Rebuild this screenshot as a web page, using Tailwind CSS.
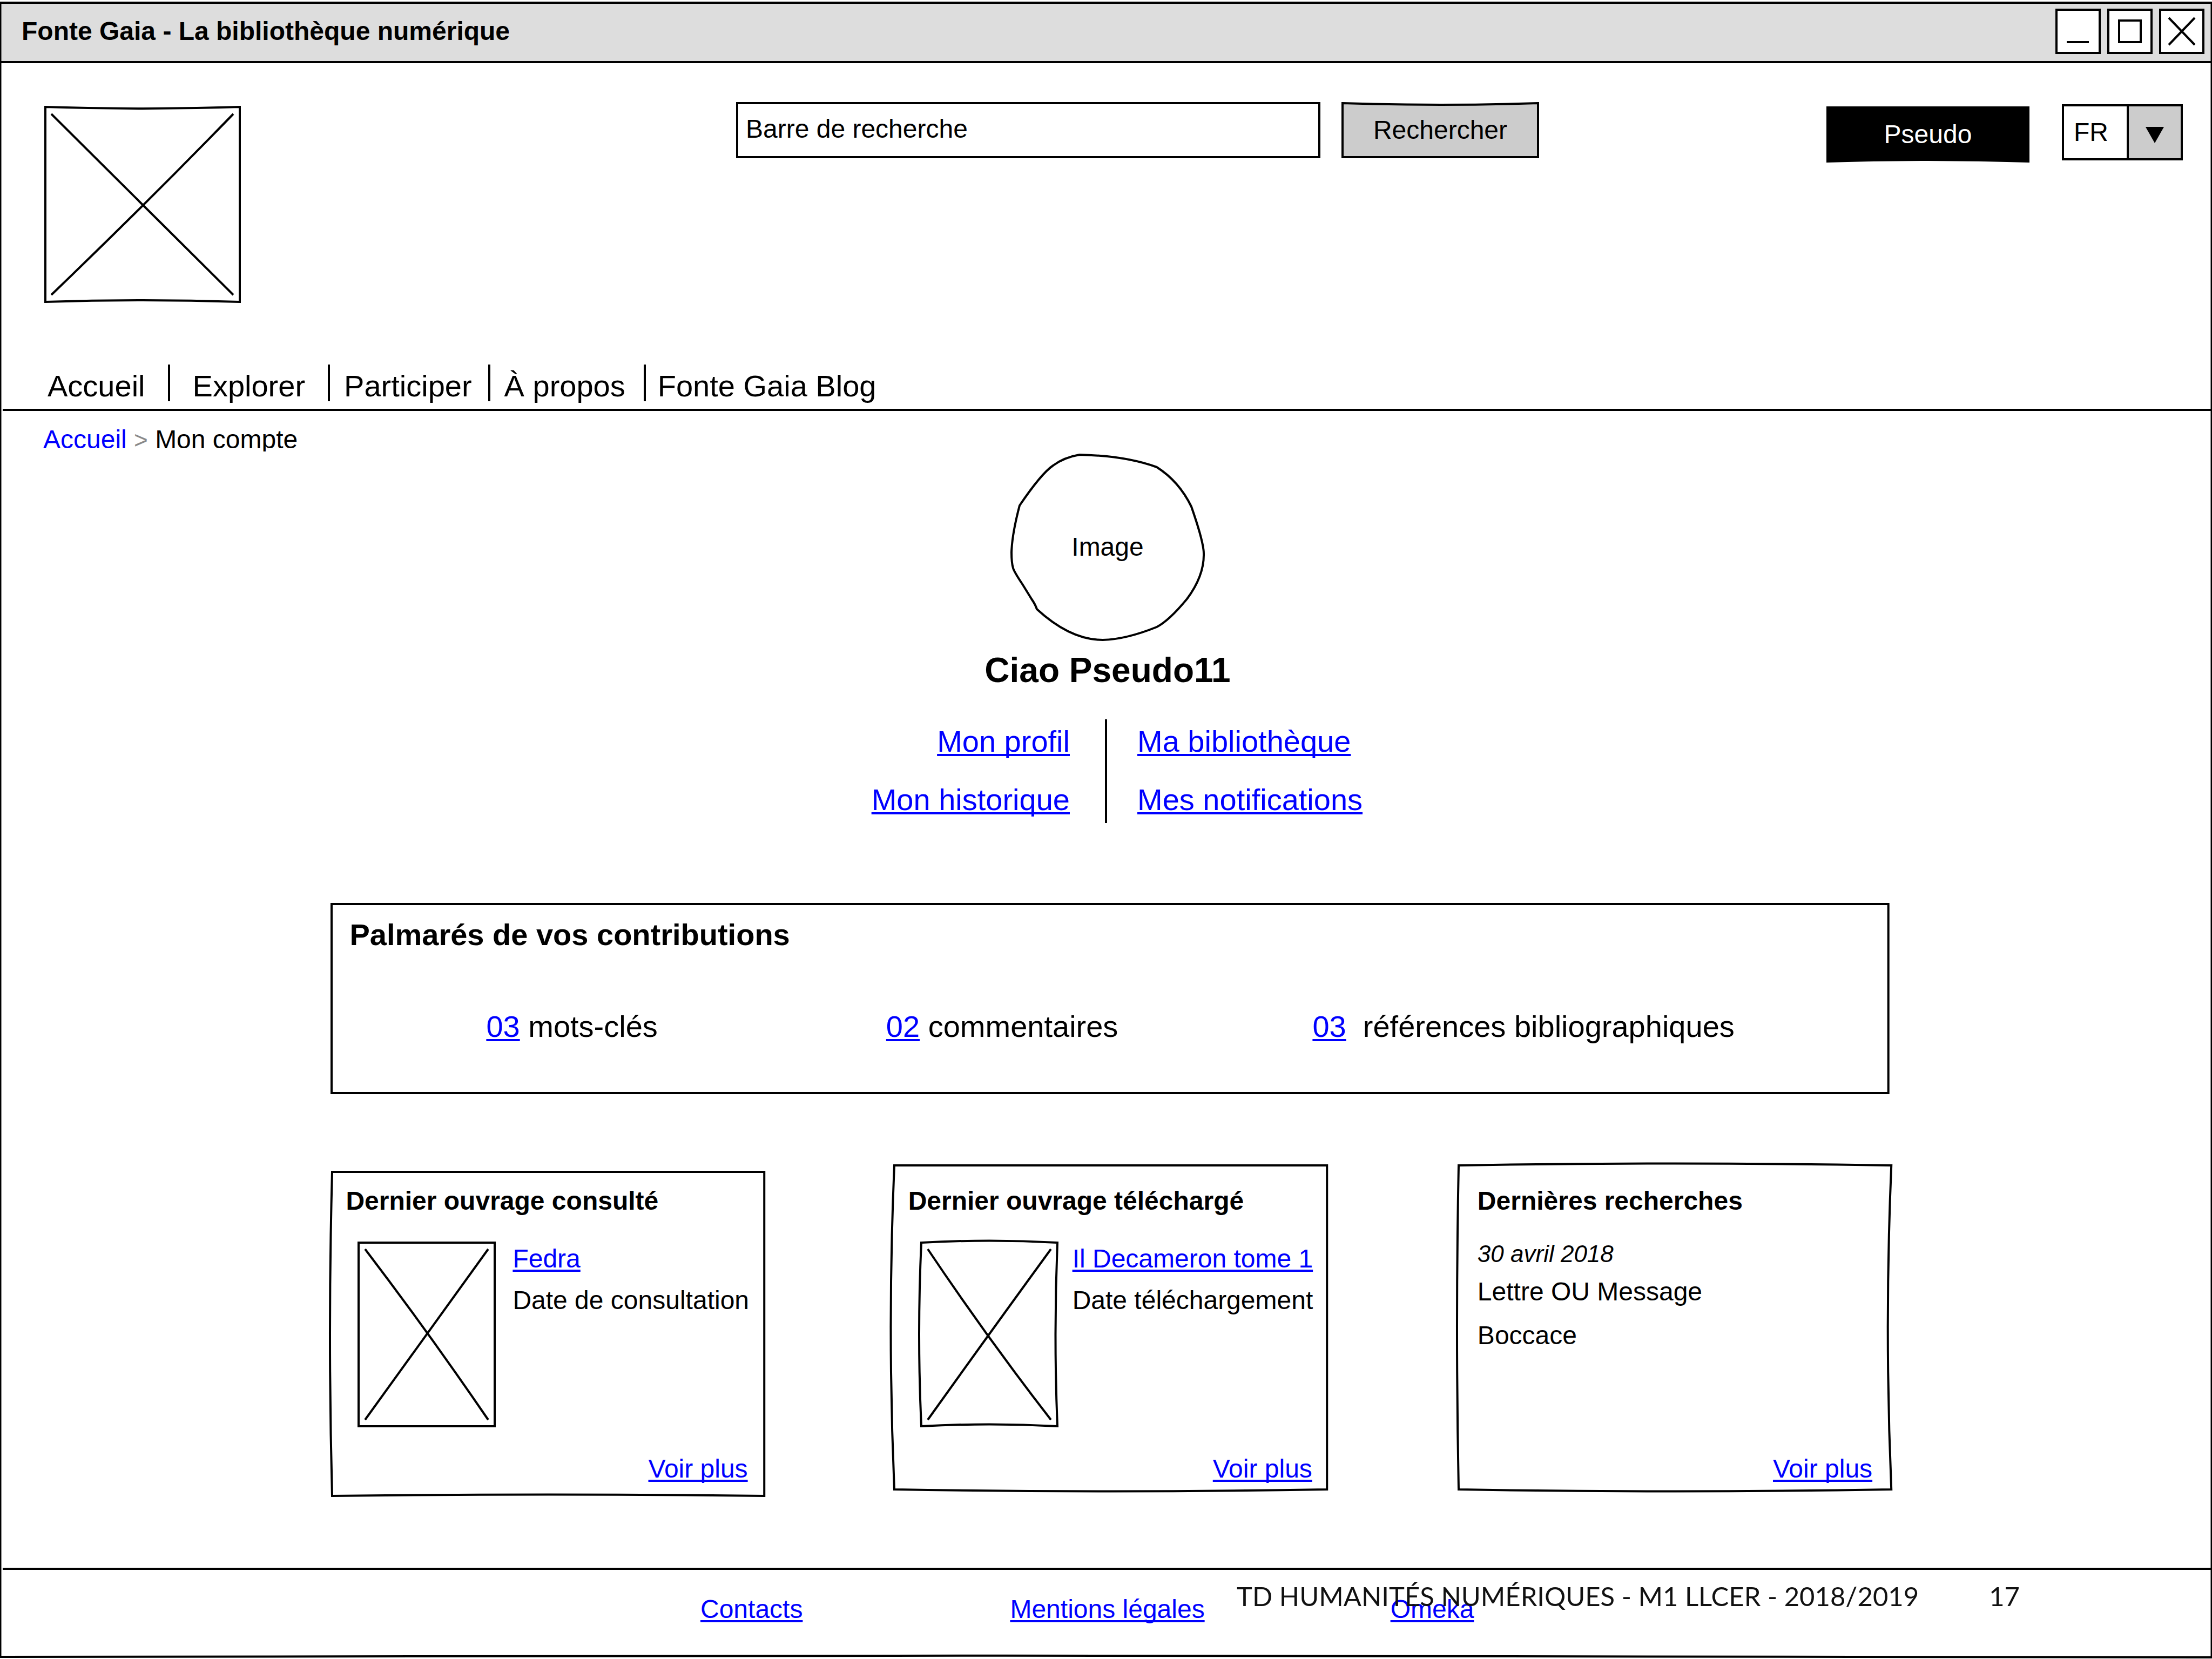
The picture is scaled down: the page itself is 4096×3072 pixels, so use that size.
<!DOCTYPE html>
<html lang="fr">
<head>
<meta charset="utf-8">
<title>Fonte Gaia - La bibliothèque numérique</title>
<script src="https://cdn.jsdelivr.net/npm/@tailwindcss/browser@4"></script>
</head>
<body class="bg-white text-black">
<div class="relative flex min-h-screen flex-col overflow-hidden pt-[3px] font-['Liberation_Sans',Arial,sans-serif] text-[48px] leading-[56px] [text-decoration-skip-ink:none]">

  <!-- window outline -->
  <svg class="pointer-events-none absolute inset-0 h-full w-full" viewBox="0 0 4096 3072" preserveAspectRatio="none" fill="none" stroke="#000" stroke-width="3" aria-hidden="true">
    <path d="M1 4V3067M4095 4Q4100 1500 4095 3069"/>
    <path d="M0 3068Q2048 3063 4096 3069" stroke-width="4"/>
  </svg>

  <!-- title bar -->
  <div class="flex h-[114px] items-center justify-between border-y-4 border-black bg-[#ddd] pr-[14px] pb-[4px] pl-[40px]">
    <span class="font-bold">Fonte Gaia - La bibliothèque numérique</span>
    <div class="flex gap-[12px]">
      <button type="button" aria-label="Réduire" class="size-[84px] border-4 border-black bg-white">
        <svg class="size-full" viewBox="4 4 76 76" fill="none" stroke="#000" stroke-width="4"><path d="M21 62H62"/></svg>
      </button>
      <button type="button" aria-label="Agrandir" class="size-[84px] border-4 border-black bg-white">
        <svg class="size-full" viewBox="4 4 76 76" fill="none" stroke="#000" stroke-width="4"><path d="M22 22H62V62H22Z"/></svg>
      </button>
      <button type="button" aria-label="Fermer" class="size-[84px] border-4 border-black bg-white">
        <svg class="size-full" viewBox="4 4 76 76" fill="none" stroke="#000" stroke-width="4"><path d="M18 17L66 67M66 17L18 67"/></svg>
      </button>
    </div>
  </div>

  <!-- header -->
  <header>
    <div class="flex items-start pt-[72px] pr-[54px] pl-[82px]">
      <svg class="mt-[7px] h-[365px] w-[364px] shrink-0" viewBox="0 0 364 365" fill="none" stroke="#000" stroke-width="4" role="img" aria-label="Logo">
        <path d="M2 2Q182 8 362 2V363Q182 357 2 363Z"/>
        <path d="M13 15Q189 191 350 350M350 15Q189 181 13 350"/>
      </svg>
      <form class="ml-[917px] flex gap-[39px]">
        <input type="text" aria-label="Recherche" value="Barre de recherche" class="h-[104px] w-[1082px] border-4 border-black bg-white pb-[6px] pl-[14px]">
        <button type="button" class="relative isolate h-[104px] w-[366px]">
          <svg class="absolute inset-0 -z-10 size-full" viewBox="0 0 366 104" preserveAspectRatio="none" fill="#ccc" stroke="#000" stroke-width="4" aria-hidden="true"><path d="M2 2Q183 8 364 2V102H2Z"/></svg>
          Rechercher
        </button>
      </form>
      <div class="ml-auto flex items-start gap-[60px]">
        <button type="button" class="relative isolate mt-[8px] h-[104px] w-[376px] text-white">
          <svg class="absolute inset-0 -z-10 size-full" viewBox="0 0 376 104" preserveAspectRatio="none" aria-hidden="true"><path d="M0 0H376V104Q188 98 0 104Z"/></svg>
          Pseudo
        </button>
        <div class="relative mt-[4px]">
          <select aria-label="Langue" class="block h-[104px] w-[224px] appearance-none border-4 border-black bg-white pl-[18px]">
            <option>FR</option>
          </select>
          <span class="pointer-events-none absolute inset-y-[4px] right-[4px] flex w-[100px] items-center justify-center border-l-4 border-black bg-[#ccc] pt-[10px]">
            <svg class="h-[30px] w-[34px]" viewBox="0 0 34 30" aria-hidden="true"><path d="M0 0H34L17 30Z"/></svg>
          </span>
        </div>
      </div>
    </div>

    <nav class="mt-[114px] flex h-[72px] items-start pl-[88px] text-[56px] leading-[64px]">
      <a href="#" class="mt-[8px] mr-[42px]">Accueil</a>
      <span class="h-[68px] w-[4px] bg-black"></span>
      <a href="#" class="mt-[8px] mr-[42px] ml-[42px]">Explorer</a>
      <span class="h-[68px] w-[4px] bg-black"></span>
      <a href="#" class="mt-[8px] mr-[30px] ml-[26px]">Participer</a>
      <span class="h-[68px] w-[4px] bg-black"></span>
      <a href="#" class="mt-[8px] mr-[34px] ml-[26px]">À propos</a>
      <span class="h-[68px] w-[4px] bg-black"></span>
      <a href="#" class="mt-[8px] ml-[22px]">Fonte Gaia Blog</a>
    </nav>
    <svg class="mt-[10px] block h-[8px] w-full" viewBox="0 0 4096 8" preserveAspectRatio="none" fill="none" stroke="#000" stroke-width="4" aria-hidden="true"><path d="M5 2Q2048 7 4096 2"/></svg>
  </header>

  <main>
    <nav aria-label="Fil d'Ariane" class="mt-[21px] h-[50px] overflow-hidden pl-[80px]">
      <a href="#" class="text-[#00f]">Accueil</a> <span class="text-[44px] text-[#888]">&gt;</span> <span>Mon compte</span>
    </nav>

    <!-- profile -->
    <section>
      <div class="mt-[3px] flex flex-col items-center pl-[6px]">
        <div class="relative flex h-[348px] w-[362px] items-center justify-center">
          <svg class="absolute inset-0 size-full" viewBox="0 0 362 348" fill="none" stroke="#000" stroke-width="4" aria-hidden="true">
            <path d="M129 3Q215 5 272 26Q313 52 336 99Q359 165 359 186Q360 227 328 270Q295 310 272 322Q215 345 172 346Q112 346 50 289Q47 280 40 270L24 244Q8 220 6 213Q3 203 3 184Q4 150 18 97Q58 38 80 23Q100 8 129 3Z"/>
          </svg>
          <span>Image</span>
        </div>
        <h1 class="mt-[18px] text-[64px] leading-[72px] font-bold">Ciao Pseudo11</h1>
      </div>
      <div class="mt-[55px] grid h-[192px] grid-cols-[1fr_4px_1fr] text-[56px] leading-[64px] text-[#00f]">
        <div class="flex flex-col items-end gap-[44px] pt-[9px] pr-[65px]">
          <a href="#" class="underline decoration-[4px] underline-offset-[4px]">Mon profil</a>
          <a href="#" class="underline decoration-[4px] underline-offset-[4px]">Mon historique</a>
        </div>
        <span class="bg-black"></span>
        <div class="flex flex-col items-start gap-[44px] pt-[9px] pl-[56px]">
          <a href="#" class="underline decoration-[4px] underline-offset-[4px]">Ma bibliothèque</a>
          <a href="#" class="underline decoration-[4px] underline-offset-[4px]">Mes notifications</a>
        </div>
      </div>
    </section>

    <div class="pr-[14.5%] pl-[15%]">
      <!-- contributions -->
      <section class="relative mt-[150px] mr-[5px] pt-[25px] pb-[91px] pl-[33px] text-[56px] leading-[64px]">
        <svg class="pointer-events-none absolute inset-0 size-full overflow-visible" viewBox="0 0 2883 350" preserveAspectRatio="none" fill="none" stroke="#000" stroke-width="4" aria-hidden="true"><path d="M0 0Q1441 6 2883 0V350Q1441 346 0 350Z"/></svg>
        <h2 class="font-bold">Palmarés de vos contributions</h2>
        <div class="mt-[106px] flex whitespace-pre">
          <p class="ml-[253px]"><a href="#" class="text-[#00f] underline decoration-[4px] underline-offset-[4px]">03</a> mots-clés</p>
          <p class="ml-[423px]"><a href="#" class="text-[#00f] underline decoration-[4px] underline-offset-[4px]">02</a> commentaires</p>
          <p class="ml-[360px]"><a href="#" class="text-[#00f] underline decoration-[4px] underline-offset-[4px]">03</a>  références bibliographiques</p>
        </div>
      </section>

      <div class="mt-[134px] grid grid-cols-3 items-start gap-[242px] whitespace-nowrap">
        <!-- last viewed -->
        <section class="relative mt-[12px] flex min-h-[600px] flex-col pt-[26px] pb-[22px]">
          <svg class="pointer-events-none absolute inset-0 size-full overflow-visible" viewBox="0 0 800 600" preserveAspectRatio="none" fill="none" stroke="#000" stroke-width="4" aria-hidden="true"><path d="M1 0H800V600Q400 595 1 600Q-7 300 1 0Z"/></svg>
          <h3 class="pl-[26px] font-bold">Dernier ouvrage consulté</h3>
          <div class="mt-[49px] flex pl-[50px]">
            <svg class="h-[340px] w-[252px] shrink-0 overflow-visible" viewBox="0 0 252 340" fill="none" stroke="#000" stroke-width="4" role="img" aria-label="Couverture">
              <path d="M0 0H252V340H0Z"/>
              <path d="M12 12Q130 167 240 328M240 12Q130 164 12 328"/>
            </svg>
            <div class="ml-[33px] flex flex-col items-start gap-[21px] pt-[2px]">
              <a href="#" class="text-[#00f] underline decoration-[4px] underline-offset-[4px]">Fedra</a>
              <p>Date de consultation</p>
            </div>
          </div>
          <a href="#" class="mt-auto mr-[31px] self-end text-[#00f] underline decoration-[4px] underline-offset-[4px]">Voir plus</a>
        </section>

        <!-- last downloaded -->
        <section class="relative flex min-h-[600px] flex-col pt-[38px] pb-[10px]">
          <svg class="pointer-events-none absolute inset-0 size-full overflow-visible" viewBox="0 0 800 600" preserveAspectRatio="none" fill="none" stroke="#000" stroke-width="4" aria-hidden="true"><path d="M-2 0H798V600Q398 607 -2 600Q-15 300 -2 0Z"/></svg>
          <h3 class="pl-[24px] font-bold">Dernier ouvrage téléchargé</h3>
          <div class="mt-[49px] flex pl-[48px]">
            <svg class="h-[340px] w-[252px] shrink-0 overflow-visible" viewBox="0 0 252 340" fill="none" stroke="#000" stroke-width="4" role="img" aria-label="Couverture">
              <path d="M0 0Q126 -7 252 0Q245 170 252 340Q126 333 0 340Q-8 170 0 0Z"/>
              <path d="M12 12Q122 176 240 328M240 12Q122 174 12 328"/>
            </svg>
            <div class="ml-[28px] flex flex-col items-start gap-[21px] pt-[2px]">
              <a href="#" class="text-[#00f] underline decoration-[4px] underline-offset-[4px]">Il Decameron tome 1</a>
              <p>Date téléchargement</p>
            </div>
          </div>
          <a href="#" class="mt-auto mr-[29px] self-end text-[#00f] underline decoration-[4px] underline-offset-[4px]">Voir plus</a>
        </section>

        <!-- last searches -->
        <section class="relative flex min-h-[600px] flex-col pt-[38px] pb-[10px] pl-[35px]">
          <svg class="pointer-events-none absolute inset-0 size-full overflow-visible" viewBox="0 0 800 600" preserveAspectRatio="none" fill="none" stroke="#000" stroke-width="4" aria-hidden="true"><path d="M0 0Q400 -7 800 0Q787 300 800 600Q400 607 0 600Q-6 300 0 0Z"/></svg>
          <h3 class="font-bold">Dernières recherches</h3>
          <p class="mt-[42px] text-[44px] italic">30 avril 2018</p>
          <p class="mt-[14px]">Lettre OU Message</p>
          <p class="mt-[25px]">Boccace</p>
          <a href="#" class="mt-auto mr-[35px] self-end text-[#00f] underline decoration-[4px] underline-offset-[4px]">Voir plus</a>
        </section>
      </div>
    </div>
  </main>

  <footer class="relative mt-[130px] whitespace-nowrap">
    <svg class="block h-[8px] w-full" viewBox="0 0 4096 8" preserveAspectRatio="none" fill="none" stroke="#000" stroke-width="4" aria-hidden="true"><path d="M5 5Q2048 0 4096 5"/></svg>
    <div class="mt-[44px] flex pl-[1297px] text-[#00f]">
      <a href="#" class="underline decoration-[4px] underline-offset-[4px]">Contacts</a>
      <a href="#" class="ml-[384px] underline decoration-[4px] underline-offset-[4px]">Mentions légales</a>
      <a href="#" class="ml-[344px] underline decoration-[4px] underline-offset-[4px]">Omeka</a>
    </div>
    <p class="absolute top-[27px] right-[356px] flex gap-[130px] font-['Lato',sans-serif] text-[49px] text-[#111]">
      <span>TD HUMANITÉS NUMÉRIQUES - M1 LLCER - 2018/2019</span>
      <span>17</span>
    </p>
  </footer>
</div>
</body>
</html>
